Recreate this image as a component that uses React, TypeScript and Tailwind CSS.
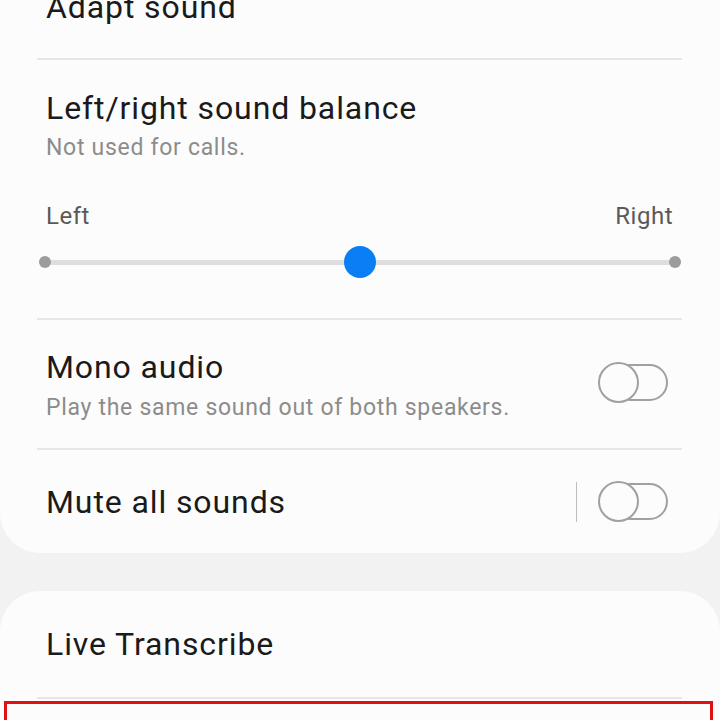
import React from "react";

function Toggle() {
  return (
    <div className="relative h-[41px] w-[70px]">
      <div className="absolute left-[14px] right-0 top-[2px] h-[37px] rounded-full border-2 border-[#a0a0a0]" />
      <div className="absolute left-0 top-0 h-[41px] w-[41px] rounded-full border-2 border-[#a0a0a0] bg-[#fcfcfc]" />
    </div>
  );
}

function Divider() {
  return <div className="ml-[37px] mr-[38px] h-[2px] bg-[#e6e6e6]" />;
}

const title = "text-[32px] leading-[38px] tracking-[0.9px] text-[#1a1a1a]";
const sub = "text-[23px] leading-[28px] tracking-[0.7px] text-[#8c8c8c]";

export default function App() {
  return (
    <div
      className="relative h-[720px] w-[720px] overflow-hidden bg-[#f2f2f2]"
      style={{ fontFamily: "Roboto, 'Noto Sans', sans-serif" }}
    >
      <div className="-mt-[40px] rounded-[40px] bg-[#fcfcfc]">
        <div className="h-[98px] px-[46px] pt-[28px]">
          <div className={title}>Adapt sound</div>
        </div>
        <Divider />
        <div className="px-[46px] pt-[29px]">
          <div className={title}>Left/right sound balance</div>
          <div className={"mt-[7px] " + sub}>Not used for calls.</div>
          <div className="mt-[40px] flex justify-between text-[24px] leading-[28px] tracking-[0.5px] text-[#5a5a5a]">
            <span>Left</span>
            <span className="mr-[1px]">Right</span>
          </div>
        </div>
        <div className="relative mx-[39px] mt-[16px] h-[32px]">
          <div className="absolute left-[6px] right-[6px] top-[14px] h-[5px] rounded-full bg-[#dedede]" />
          <div className="absolute left-0 top-[10px] h-[12px] w-[12px] rounded-full bg-[#9c9c9c]" />
          <div className="absolute right-0 top-[10px] h-[12px] w-[12px] rounded-full bg-[#9c9c9c]" />
          <div className="absolute left-[305px] top-0 h-[32px] w-[32px] rounded-full bg-[#0a7ff5]" />
        </div>
        <div className="h-[40px]" />
        <Divider />
        <div className="flex h-[128px] items-center justify-between pl-[46px] pr-[52px]">
          <div className="mt-[2px]">
            <div className={title}>Mono audio</div>
            <div className={"mt-[8px] " + sub}>Play the same sound out of both speakers.</div>
          </div>
          <div className="-mt-[3px]">
            <Toggle />
          </div>
        </div>
        <Divider />
        <div className="flex h-[103px] items-center justify-between pl-[46px] pr-[52px]">
          <div className={title}>Mute all sounds</div>
          <div className="flex items-center">
            <div className="mr-[21px] h-[40px] w-px bg-[#bdbdbd]" />
            <Toggle />
          </div>
        </div>
      </div>
      <div className="mt-[38px] rounded-[40px] bg-[#fcfcfc]">
        <div className="flex h-[106px] items-center px-[46px]">
          <div className={title}>Live Transcribe</div>
        </div>
        <Divider />
        <div className="ml-[4px] mr-[7px] mt-[2px] h-[80px] border-[3px] border-[#e01010]" />
      </div>
    </div>
  );
}
